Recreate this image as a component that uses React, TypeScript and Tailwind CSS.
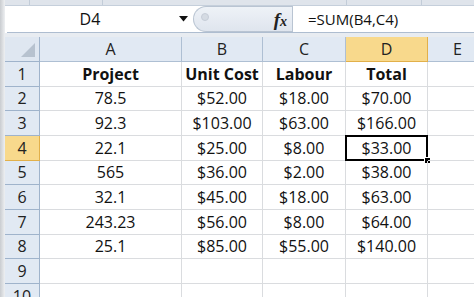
import React from "react";

const cols = [
  { key: "A", w: 142 },
  { key: "B", w: 81 },
  { key: "C", w: 83 },
  { key: "D", w: 82 },
  { key: "E", w: 60 },
];

const data: string[][] = [
  ["Project", "Unit Cost", "Labour", "Total"],
  ["78.5", "$52.00", "$18.00", "$70.00"],
  ["92.3", "$103.00", "$63.00", "$166.00"],
  ["22.1", "$25.00", "$8.00", "$33.00"],
  ["565", "$36.00", "$2.00", "$38.00"],
  ["32.1", "$45.00", "$18.00", "$63.00"],
  ["243.23", "$56.00", "$8.00", "$64.00"],
  ["25.1", "$85.00", "$55.00", "$140.00"],
  ["", "", "", ""],
  ["", "", "", ""],
];

export default function App() {
  return (
    <div
      className="w-[474px] h-[297px] overflow-hidden flex bg-white text-[#111]"
      style={{ fontFamily: '"Open Sans", "Liberation Sans", sans-serif' }}
    >
      {/* left shadow edge */}
      <div className="w-[5px] shrink-0 bg-gradient-to-r from-[#c9ccd0] to-[#eef0f2]" />
      <div className="flex-1 flex flex-col min-w-0">
        {/* top ribbon strip */}
        <div className="h-[6px] shrink-0 bg-[#dfe4eb] flex border-b border-[#c5cfdb]">
          <div className="w-[25px] border-r border-[#c2ccd8]" />
          <div className="w-[73px] border-r border-[#c2ccd8]" />
          <div className="w-[244px] border-r border-[#c2ccd8]" />
          <div className="w-[75px] border-r border-[#c2ccd8]" />
        </div>
        {/* formula bar */}
        <div className="h-[27px] shrink-0 flex bg-white border-b border-[#aebdd0] ml-[2px]">
          <div className="w-[186px] shrink-0 relative flex items-center justify-center text-[16px]">
            <span className="mr-[20px]">D4</span>
            <svg className="absolute left-[172px] top-[10px]" width="9" height="6" viewBox="0 0 9 6">
              <path d="M0 0 H9 L4.5 5.5 Z" fill="#111" />
            </svg>
          </div>
          <div className="w-[99px] shrink-0 relative rounded-l-full bg-gradient-to-b from-[#eef2f7] to-[#dfe5ee] border border-[#b9c4d2] border-r-0 flex items-center justify-end pr-[5px]">
            <div className="absolute left-[7px] top-[6px] w-[8px] h-[8px] rounded-full bg-[#d5dbe3] border border-[#c6cdd7]" />
            <span
              className="italic font-bold text-[19px] text-[#222] leading-none"
              style={{ fontFamily: '"Liberation Serif", serif' }}
            >
              f<span className="text-[14px]">x</span>
            </span>
          </div>
          <div className="flex-1 flex items-center pl-[15px] text-[15px] border-l border-[#b9c4d2]">
            =SUM(B4,C4)
          </div>
        </div>
        {/* gap */}
        <div className="h-[4px] shrink-0 bg-[#e8ecf1]" />
        {/* column header row */}
        <div className="h-[25px] shrink-0 flex text-[16px] text-[#222]">
          <div className="w-[35px] shrink-0 relative bg-[#dfe7f1] border-r border-b border-[#9fb3cb]">
            <svg className="absolute right-[4px] bottom-[4px]" width="14" height="14" viewBox="0 0 14 14">
              <path d="M14 0 V14 H0 Z" fill="#b7c2cf" />
            </svg>
          </div>
          {cols.map((c) => (
            <div
              key={c.key}
              className={
                c.key === "D"
                  ? "shrink-0 flex items-center justify-center bg-[#f8d98c] border-r border-b border-[#e2b04a]"
                  : "shrink-0 flex items-center justify-center bg-[#e1e9f3] border-r border-b border-[#aebfd3]"
              }
              style={{ width: c.w }}
            >
              {c.key}
            </div>
          ))}
        </div>
        {/* rows */}
        {data.map((row, ri) => (
          <div key={ri} className="h-[24.67px] shrink-0 flex text-[16px]">
            <div
              className={
                ri === 3
                  ? "w-[35px] shrink-0 flex items-center justify-center bg-[#f8d98c] border-r border-b border-[#e2b04a] text-[#222]"
                  : "w-[35px] shrink-0 flex items-center justify-center bg-[#e1e9f3] border-r border-b border-[#9fb3cb] text-[#222]"
              }
            >
              {ri + 1}
            </div>
            {cols.map((c, ci) => {
              const selected = ri === 3 && ci === 3;
              return (
                <div
                  key={c.key}
                  className={
                    "shrink-0 relative flex items-center justify-center border-r border-b border-[#dadcdf] " +
                    (ri === 0 ? "font-bold" : "")
                  }
                  style={{ width: c.w }}
                >
                  {row[ci] ?? ""}
                  {selected && (
                    <>
                      <div className="absolute -left-[1px] -top-[1px] -right-[1px] -bottom-[1px] border-2 border-black pointer-events-none" />
                      <div className="absolute -right-[4px] -bottom-[4px] w-[7px] h-[7px] bg-black border border-white" />
                    </>
                  )}
                </div>
              );
            })}
          </div>
        ))}
      </div>
    </div>
  );
}
